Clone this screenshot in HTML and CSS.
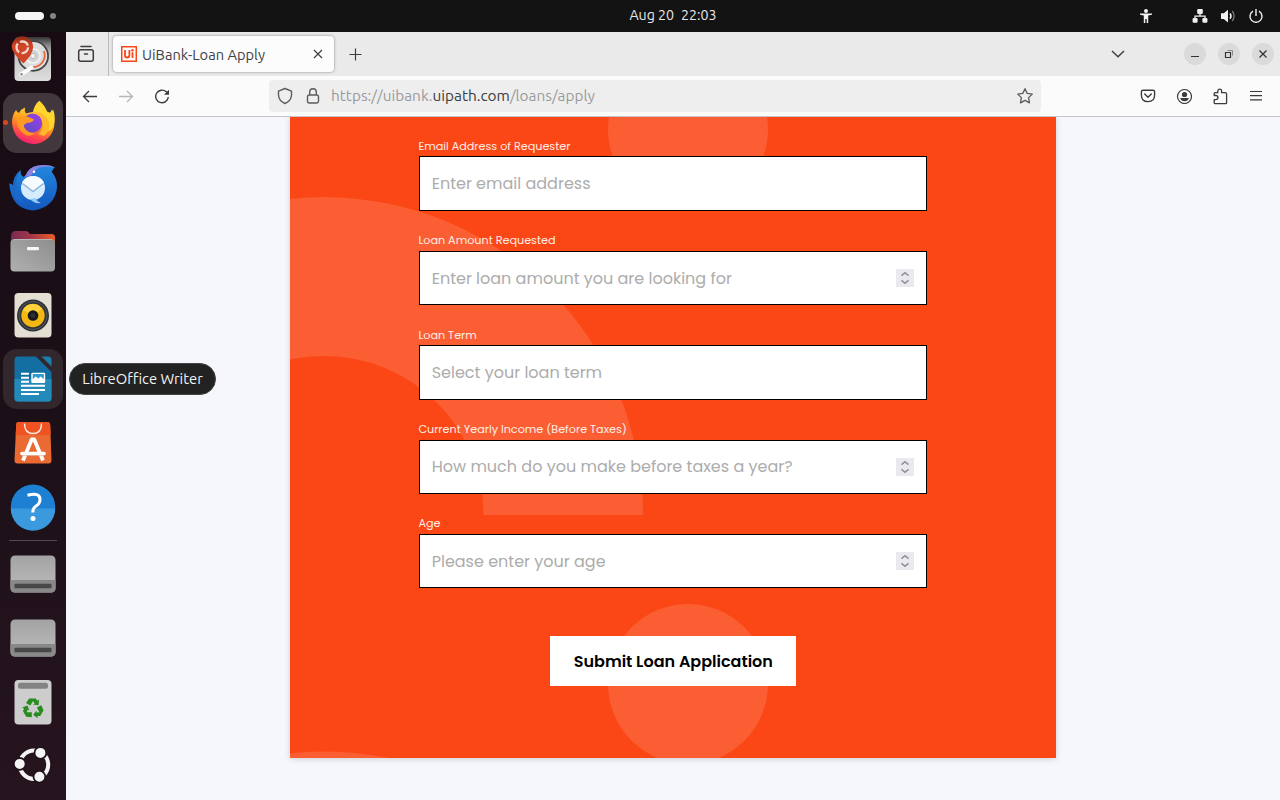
FILE: index.html
```html
<!DOCTYPE html>
<html lang="en">
<head>
<meta charset="utf-8">
<title>UiBank-Loan Apply</title>
<link rel="stylesheet" href="styles.css">
</head>
<body>
<div class="desktop">
  <header class="topbar">
    <div class="workspaces"><span class="pill"></span><span class="dot"></span></div>
    <div class="clock"><span>Aug 20</span><span>22:03</span></div>
    <div class="tray">
      <svg class="tray-access" width="16" height="16" viewBox="0 0 16 16" fill="#f2f2f2"><circle cx="8" cy="3" r="2"/><path d="M2 5.500h12v1.200l-3.800.8V15H8.700v-4H7.300v4H5.800V7.500L2 6.700z"/></svg>
      <svg width="16" height="16" viewBox="0 0 16 16"><g fill="#f2f2f2"><rect x="5.200" y="1" width="5.600" height="5" rx="1.200"/><rect x=".6" y="10" width="5" height="4.800" rx="1.200"/><rect x="10.400" y="10" width="5" height="4.800" rx="1.200"/></g><path d="M8 6v2.200M3 10V8.200h10V10" fill="none" stroke="#f2f2f2" stroke-width="1.300"/></svg>
      <svg width="16" height="16" viewBox="0 0 16 16"><path d="M1 5.300h2.800L8 1.800v12.600L3.800 11H1z" fill="#f2f2f2"/><path d="M10 5.500q2 2.600 0 5.200" fill="none" stroke="#f2f2f2" stroke-width="1.500"/><path d="M12.300 3q3.600 5 0 10.200" fill="none" stroke="#777" stroke-width="1.300"/></svg>
      <svg width="16" height="16" viewBox="0 0 16 16" fill="none" stroke="#f2f2f2" stroke-width="1.400"><path d="M5 3.100a6 6 0 1 0 6 0M8 1v7"/></svg>
    </div>
  </header>

  <div class="workarea">
    <nav class="dock">
      <span class="app"><svg width="60" height="60" viewBox="0 0 60 60">
        <defs>
          <linearGradient id="disk" x2="0" y2="1"><stop offset="0" stop-color="#333"/><stop offset=".2" stop-color="#8c8c8c"/><stop offset=".4" stop-color="#c4c4c4"/><stop offset="1" stop-color="#dedede"/></linearGradient>
          <linearGradient id="pin" x2="0" y2="1"><stop offset="0" stop-color="#8d2c17"/><stop offset=".35" stop-color="#cf4526"/></linearGradient>
          <linearGradient id="fox" x1=".7" x2=".3" y2="1"><stop offset="0" stop-color="#ffe83b"/><stop offset=".45" stop-color="#ff9a18"/><stop offset=".75" stop-color="#ff4a4a"/><stop offset="1" stop-color="#f2177d"/></linearGradient>
          <linearGradient id="orb" x1="1" x2="0" y2="1"><stop offset="0" stop-color="#a03bea"/><stop offset="1" stop-color="#5a4fc4"/></linearGradient>
          <linearGradient id="bird" x2="0" y2="1"><stop offset="0" stop-color="#2388df"/><stop offset="1" stop-color="#1357bd"/></linearGradient>
          <linearGradient id="gray" x2="0" y2="1"><stop offset="0" stop-color="#a3a3a3"/><stop offset="1" stop-color="#bcbcbc"/></linearGradient>
          <linearGradient id="folder" x1="1" x2="0" y2="1"><stop offset="0" stop-color="#8d8d8d"/><stop offset="1" stop-color="#b0b0b0"/></linearGradient>
          <linearGradient id="tabgrad"><stop offset="0" stop-color="#772953"/><stop offset=".45" stop-color="#a43747"/><stop offset="1" stop-color="#f05a28"/></linearGradient>
        </defs>
        <rect x="11.500" y="8" width="36.500" height="44" rx="4" fill="url(#disk)"/>
        <circle cx="30.300" cy="27" r="14.800" fill="#ddd" stroke="#454545" stroke-width="1.800"/><circle cx="30" cy="27" r="7" fill="#d2d2d2" stroke="#efefef" stroke-width="2"/><circle cx="30" cy="27" r="2.500" fill="#f4f4f4" stroke="#bbb"/>
        <path d="M41 22a12 12 0 0 1-13 16" fill="none" stroke="#e9633c" stroke-width="1.800"/>
        <path d="M18 45.500L28.500 38.500" stroke="#fafafa" stroke-width="4" stroke-linecap="round"/><circle cx="18.500" cy="45.300" r="1.200" fill="#888"/>
        <path d="M20.500 34.500Q9 24 8.700 18a10.700 10.700 0 0 1 21.400 0Q30 25 20.500 34.500" fill="url(#pin)"/><circle cx="19.300" cy="18.300" r="5.800" fill="none" stroke="#f0d4ca" stroke-width="2.300" stroke-dasharray="9.600 2.500"/>
      </svg></span>
      <span class="app running"><svg width="60" height="60" viewBox="0 0 60 60">
        <path d="M9 30Q9 22 13 17q1 2 3 3 2-4 6-5.500-1 3.500 1 6 8-3 12 0 12 3 15-4 2.500 6 1.500 13A21 21 0 0 1 30 51Q11 49 9 30" fill="url(#fox)"/>
        <path d="M36.300 7.700q5 4 8 11l3 1 1.500-3q3 6 2.500 13-2 9-9 9 0-8-6-16l-6.500-2q1-9 6.500-13" fill="#ffd52f"/>
        <circle cx="29.700" cy="30" r="9.500" fill="url(#orb)"/>
        <path d="M29 20q9 1 11 9 1 8-5 12l6 2q7-6 5-14-4-10-13-10" fill="#ffb92b"/>
        <path d="M14 25q6-4 14 0l3 1.500q-1 3-6 3.300-5 1.200-4 4.200 3 7 11 6-5 5-11 1-8-6-7-16" fill="#ff9a24"/>
      </svg></span>
      <span class="app"><svg width="60" height="60" viewBox="0 0 60 60">
        <path d="M17.700 13q-1 4 2.600 7L23 18Q27 8.500 38 8.500q9-1 14 2-2 1-3.300 4.200 6 7 5.300 16Q52 50 30 53.500 8 52 6.300 26.300l4 2Q10 19 17.700 13" fill="url(#bird)"/>
        <path d="M22 19.700Q25 10 35 8.500q10-1.500 17 2-9-1.500-16 0-5 3-7 7-2 2-7 2.200" fill="#8b82e0"/><path d="M17.700 13q-6 8-4 16 1 10 8 17Q8 43 8 27l2.300 1.300Q10 19 17.700 13" fill="#1b68c9"/>
        <circle cx="30" cy="31" r="12" fill="#d5ecff"/><path d="M19 26l11 8.500L41 26q-3-7-11-7t-11 7" fill="#f6fbff"/><path d="M19.500 26.500l10.500 8 10.500-8" fill="none" stroke="#8fb2e0" stroke-width="1.400"/><path d="M27 42q4 5 11 4-5-2-5-5" fill="#91ccff"/><circle cx="31" cy="14.800" r="1.200" fill="#fff"/>
      </svg></span>
      <span class="app"><svg width="60" height="60" viewBox="0 0 60 60">
        <path d="M8 17q0-7 4-7h11q2 0 4 3h22q3 0 3 4v8H8z" fill="url(#tabgrad)"/><rect x="7.500" y="18" width="44.500" height="32.500" rx="4" fill="url(#folder)"/><path d="M11 18.500h38" stroke="#b8b8b8"/><rect x="24" y="26" width="12" height="3.200" rx="1" fill="#f7f7f7"/>
      </svg></span>
      <span class="app"><svg width="60" height="60" viewBox="0 0 60 60">
        <rect x="11.500" y="8" width="37" height="44.500" rx="4" fill="#e4dfd3"/><circle cx="30" cy="30.500" r="16" fill="#303338"/><circle cx="30" cy="30.500" r="14" fill="none" stroke="#535861"/><circle cx="30" cy="30.500" r="11.700" fill="#f3b712"/><path d="M20 25l10 5.500L39 24a11.500 11.500 0 0 0-9-5q-7 0-10 6" fill="#ffd33b"/><circle cx="30" cy="30.500" r="5.300" fill="#17191c"/><circle cx="30" cy="30.500" r="2.500" fill="#2c3036"/>
      </svg></span>
      <span class="app hovered"><svg width="60" height="60" viewBox="0 0 60 60">
        <path d="M15 7.500h18L48.500 23v26q0 3.500-3.500 3.500H15q-3.500 0-3.500-3.500V11q0-3.500 3.500-3.500" fill="#136fa1"/><path d="M11.500 30h37v19q0 3.500-3.500 3.500H15q-3.500 0-3.500-3.500z" fill="#248aba"/><path d="M38.500 7.500H45q3.500 0 3.500 3.500v6.500z" fill="#1c80ae"/>
        <path d="M18 24.700h8M18 28.700h8M18 32.700h8M18 36.800h24M18 41h24M18 45h18" stroke="#fff" stroke-width="1.900"/><rect x="29" y="24.400" width="12.500" height="9" rx=".7" fill="#2d9bd0" stroke="#fff" stroke-width="1.400"/><path d="M29 33.500V31l3.500-3.500 3 2 2-2 4 3v3z" fill="#fff"/>
      </svg></span>
      <span class="app"><svg width="60" height="60" viewBox="0 0 60 60">
        <path d="M15.500 9h29q2.500 0 2.700 3L48.500 47q0 3.500-3 3.500h-31q-3 0-3-3.500l1.700-35q0-3 2.300-3" fill="#e96a32"/><path d="M15.500 9h29q2.500 0 2.700 3l.5 10H12.700l.5-10q0-3 2.300-3" fill="#f05322"/><path d="M21.500 10.500q0 10 8.500 10t8.500-10" fill="none" stroke="#f7e7dd" stroke-width="1.500"/>
        <path d="M20 47.500L28.700 26.500h2.600L40 47.500" fill="none" stroke="#fff" stroke-width="3.800" stroke-linejoin="round"/><path d="M19 40.500h22" stroke="#fff" stroke-width="3.600" stroke-linecap="round"/><path d="M18 42.600h24" stroke="#d9b5a2" stroke-width=".7"/>
      </svg></span>
      <span class="app"><svg width="60" height="60" viewBox="0 0 60 60"><circle cx="30" cy="29.700" r="22.200" fill="#1e80d2"/><path d="M7.800 31.500a22.200 22.200 0 0 0 44.400 0z" fill="#3b99de"/><path d="M24.500 18.300q12.500-3.500 12.500 4.200 0 4-4 6.500-3.200 2-3.200 6.500" fill="none" stroke="#fff" stroke-width="3"/><circle cx="30" cy="41.500" r="2.500" fill="#fff"/></svg></span>
      <span class="divider"></span>
      <span class="app"><svg width="60" height="60" viewBox="0 0 60 60"><rect x="7.500" y="11.500" width="45" height="37" rx="4.500" fill="url(#gray)"/><path d="M7.500 36h45v8q0 4.500-4.500 4.500H12q-4.500 0-4.500-4.500z" fill="#898989"/><rect x="11.500" y="39.700" width="37" height="4.500" rx=".8" fill="#484848"/></svg></span>
      <span class="app"><svg width="60" height="60" viewBox="0 0 60 60"><rect x="7.500" y="11.500" width="45" height="37" rx="4.500" fill="url(#gray)"/><path d="M7.500 36h45v8q0 4.500-4.500 4.500H12q-4.500 0-4.500-4.500z" fill="#898989"/><rect x="11.500" y="39.700" width="37" height="4.500" rx=".8" fill="#484848"/></svg></span>
      <span class="app"><svg width="60" height="60" viewBox="0 0 60 60"><rect x="11.500" y="8" width="37" height="44.500" rx="4" fill="#cdcdcd"/><rect x="15" y="10.800" width="30" height="6" rx="2.500" fill="#838383"/>
        <g fill="#278b1e"><g id="arm"><path d="M23 31l3.200-4.500h6.600l1.500 2.200 1.900-1.100-.8 5.600-5.400-.8 1.700-1-1.700-2.300-2.700 4.500z"/></g><use href="#arm" transform="rotate(120 30 36.500)"/><use href="#arm" transform="rotate(240 30 36.500)"/></g></svg></span>
      <span class="app launcher"><svg width="60" height="60" viewBox="0 0 60 60"><circle cx="31" cy="29.700" r="14.200" fill="none" stroke="#f4f4f4" stroke-width="4"/><g fill="#f4f4f4" stroke="#21131b" stroke-width="1.800"><circle cx="16.700" cy="28.900" r="5.900"/><circle cx="37.400" cy="17.900" r="5.900"/><circle cx="36.400" cy="41.700" r="5.900"/></g></svg></span>
    </nav>

    <main class="browser">
      <div class="tabstrip">
        <span class="recent"><svg width="18" height="18" viewBox="0 0 18 18" fill="none" stroke="#3b3b40" stroke-width="1.500" stroke-linecap="round"><path d="M4 1.500h10"/><rect x="1.700" y="4.700" width="14.600" height="11.500" rx="2"/><path d="M7.500 9h3"/></svg></span>
        <div class="tab">
          <svg class="favicon" width="16" height="16" viewBox="0 0 16 16"><rect width="16" height="16" fill="#fa4616"/><rect x="1.500" y="1.500" width="13" height="13" fill="#fff"/><path d="M4 4v5.200q0 2.300 2.200 2.300t2.200-2.300V4M11.500 6.300v5.600" fill="none" stroke="#fa4616" stroke-width="1.800"/><circle cx="11.500" cy="4.200" r="1.200" fill="#fa4616"/></svg>
          <span class="tab-title">UiBank-Loan Apply</span>
          <svg class="close" width="10" height="10" viewBox="0 0 10 10" stroke="#3b3b40" stroke-width="1.100"><path d="M1 1l8 8M9 1L1 9"/></svg>
        </div>
        <svg class="newtab" width="13" height="13" viewBox="0 0 13 13" stroke="#3b3b40" stroke-width="1.200"><path d="M6.500 .5v12M.5 6.500h12"/></svg>
        <svg class="alltabs" width="14" height="8" viewBox="0 0 14 8" fill="none" stroke="#3b3b40" stroke-width="1.400"><path d="M1 1l6 5.800L13 1"/></svg>
        <div class="window-buttons">
          <span><svg width="10" height="10" viewBox="0 0 10 10" stroke="#333" stroke-width="1"><path d="M1 7.500h8"/></svg></span>
          <span><svg width="10" height="10" viewBox="0 0 10 10" fill="none" stroke="#333"><path d="M3.500 1.500h5v5" stroke="#888"/><path d="M1.500 3.500h5v5h-5z" stroke-width="1.200"/></svg></span>
          <span><svg width="10" height="10" viewBox="0 0 10 10" stroke="#333" stroke-width="1.300"><path d="M1.500 1.500l7 7M8.500 1.500l-7 7"/></svg></span>
        </div>
      </div>
      <div class="toolbar">
        <div class="nav">
          <svg width="16" height="16" viewBox="0 0 16 16" fill="none" stroke="#3b3b40" stroke-width="1.300"><path d="M15 8.500H1.500M7 3L1.500 8.500 7 14"/></svg>
          <svg width="16" height="16" viewBox="0 0 16 16" fill="none" stroke="#b6b6b8" stroke-width="1.300"><path d="M1 8.500h13.500M9 3l5.500 5.500L9 14"/></svg>
          <svg width="16" height="16" viewBox="0 0 16 16" fill="none" stroke="#3b3b40" stroke-width="1.400"><path d="M14.300 9a6.300 6.300 0 1 1-2-5.200L14 5.500"/><path d="M15 1.800v5h-5z" fill="#3b3b40" stroke="none"/></svg>
        </div>
        <div class="urlbar">
          <svg width="16" height="18" viewBox="0 0 16 18" fill="none" stroke="#5c5c60" stroke-width="1.400" stroke-linejoin="round"><path d="M8 1.500l6.500 2.700v4Q14 14 8 16.500 2 14 1.500 8.200v-4z"/></svg>
          <svg class="lock" width="14" height="18" viewBox="0 0 14 18" fill="none" stroke="#5c5c60" stroke-width="1.400"><rect x="1.500" y="8" width="11" height="8" rx="1.700"/><path d="M3.700 8V5a3.300 3.300 0 0 1 6.600 0v3"/></svg>
          <span class="url">https://uibank.<b>uipath.com</b>/loans/apply</span>
          <svg class="star" width="18" height="18" viewBox="0 0 18 18" fill="none" stroke="#5c5c60" stroke-width="1.300" stroke-linejoin="round"><path d="M9 1.700l2.200 4.700 5.100.7-3.700 3.500.9 5.300L9 13.400l-4.500 2.500.9-5.300L1.700 7.100l5.100-.7z"/></svg>
        </div>
        <div class="actions">
          <svg width="16" height="16" viewBox="0 0 16 16" fill="none" stroke="#3b3b40" stroke-width="1.400" stroke-linejoin="round" stroke-linecap="round"><path d="M3 2.200h10q1.600 0 1.600 1.600V7q0 6.600-6.600 6.600T1.400 7V3.800q0-1.600 1.600-1.600M4.700 6L8 9.200 11.300 6"/></svg>
          <svg width="16" height="16" viewBox="0 0 16 16"><circle cx="8.500" cy="8.500" r="7" fill="none" stroke="#3b3b40" stroke-width="1.200"/><circle cx="8.500" cy="6.500" r="2.600" fill="#3b3b40"/><path d="M4.200 10h8.600q-1 3.200-4.300 3.200T4.200 10" fill="#3b3b40"/></svg>
          <svg width="16" height="17" viewBox="0 0 16 17" fill="none" stroke="#3b3b40" stroke-width="1.300" stroke-linejoin="round"><path d="M2.200 7.500V5.700q0-1 1-1h2.600V3a1.900 1.900 0 0 1 3.800 0v1.700h3.700q1.300 0 1.300 1.300v8.700q0 1-1 1H3.200q-1 0-1-1v-3h1.600a2 2 0 0 0 0-4.200z"/></svg>
          <svg width="16" height="16" viewBox="0 0 16 16" stroke="#3b3b40" stroke-width="1.200"><path d="M2 3.500h12M2 7.700h12M2 11.900h12"/></svg>
        </div>
      </div>

      <div class="page">
        <form class="loan-card">
          <svg class="pattern" width="766" height="641" viewBox="0 0 766 641" fill="#fc5e34"><circle cx="398" cy="13" r="80"/><circle cx="398" cy="567" r="80"/><path d="M-285 398a319 318 0 0 1 638 0H193.500a159.500 159 0 0 0-319 0z"/><ellipse cx="34" cy="952.500" rx="319" ry="318"/></svg>
          <div class="fields">
            <label class="field"><span>Email Address of Requester</span><span class="control"><input placeholder="Enter email address"></span></label>
            <label class="field"><span>Loan Amount Requested</span><span class="control"><input placeholder="Enter loan amount you are looking for"><svg class="spin" width="18" height="18" viewBox="0 0 18 18"><path d="M5.500 6.700L9 3.700l3.500 3M5.500 11.300L9 14.300l3.500-3"/></svg></span></label>
            <label class="field"><span>Loan Term</span><span class="control"><input placeholder="Select your loan term"></span></label>
            <label class="field"><span>Current Yearly Income (Before Taxes)</span><span class="control"><input placeholder="How much do you make before taxes a year?"><svg class="spin" width="18" height="18" viewBox="0 0 18 18"><path d="M5.500 6.700L9 3.700l3.500 3M5.500 11.300L9 14.300l3.500-3"/></svg></span></label>
            <label class="field"><span>Age</span><span class="control"><input placeholder="Please enter your age"><svg class="spin" width="18" height="18" viewBox="0 0 18 18"><path d="M5.500 6.700L9 3.700l3.500 3M5.500 11.300L9 14.300l3.500-3"/></svg></span></label>
          </div>
          <button class="submit" type="button">Submit Loan Application</button>
        </form>
      </div>
    </main>
  </div>
  <div class="tooltip">LibreOffice Writer</div>
</div>
</body>
</html>
```

FILE: styles.css
```css
* { box-sizing: border-box; }
body { margin: 0; }
svg { display: block; flex: none; }
.desktop { position: relative; width: 1280px; height: 800px; overflow: hidden; display: flex; flex-direction: column; font-family: Ubuntu, "Noto Sans", sans-serif; font-size: 14.67px; font-weight: 400; }
.topbar { flex: none; height: 32px; background: #131313; color: #f2f2f2; display: grid; grid-template-columns: 1fr auto 1fr; align-items: center; padding: 0 16px 0 15px; }
.workspaces { display: flex; align-items: center; gap: 6px; }
.pill { width: 29px; height: 8px; border-radius: 4px; background: #f5f5f5; }
.dot { width: 6px; height: 6px; border-radius: 50%; background: #858585; }
.clock { display: flex; gap: 7px; line-height: 20px; padding-bottom: 2px; transform: translateX(33.5px); font-size: 14.2px; color: #e8e8e8; }
.tray { display: flex; justify-content: flex-end; gap: 12px; }
.tray-access { margin-right: 26px; }
.workarea { flex: 1; min-height: 0; display: flex; }
.dock { flex: none; width: 66px; background: linear-gradient(#180b13, #1c1018 50%, #26141e); overflow: hidden; display: flex; flex-direction: column; align-items: center; gap: 4px; }
.app { flex: none; position: relative; width: 60px; height: 60px; border-radius: 14px; }
.app:first-child { margin-top: -3px; }
.running { background: #41373d; }
.running::before { content: ""; position: absolute; left: 0; top: 27px; width: 5px; height: 5px; border-radius: 50%; background: #dc461c; }
.hovered { background: #32272d; }
.divider { flex: none; width: 48px; height: 1px; background: #514950; margin: -1px 0; }
.launcher { margin-top: -1px; }
.browser { flex: 1; min-width: 0; display: flex; flex-direction: column; }
.tabstrip { flex: none; height: 44px; background: #eaeaea; display: flex; align-items: center; padding-right: 6px; }
.recent { width: 43px; height: 44px; border-right: 1px solid #b9b9b9; display: flex; align-items: center; padding-left: 11px; }
.tab { width: 221px; height: 36px; margin-left: 4px; border-radius: 4px; background: #fcfcfc; box-shadow: 0 0 3px #888; display: flex; align-items: center; padding: 0 11px 0 8px; color: #414146; }
.tab-title { flex: 1; margin-left: 5px; white-space: nowrap; }
.newtab { margin-left: 15px; }
.alltabs { margin-left: auto; }
.window-buttons { display: flex; gap: 12px; margin-left: 59px; }
.window-buttons span { width: 22px; height: 22px; border-radius: 50%; background: #dadada; display: grid; place-items: center; }
.toolbar { flex: none; height: 41px; background: #fbfbfb; border-bottom: 1px solid #c5c5c5; display: flex; align-items: center; padding: 0 16px; }
.nav { display: flex; gap: 20px; }
.urlbar { width: 772px; height: 32px; margin-left: 99px; background: #eee; border-radius: 4px; display: flex; align-items: center; padding: 0 7px 0 8px; color: #9a9a9d; }
.lock { margin-left: 13px; }
.url { margin-left: 11px; flex: 1; font-size: 15.4px; white-space: nowrap; padding-bottom: 1px; }
.url b { font-weight: 400; color: #3b3b40; }
.actions { display: flex; gap: 20px; margin-left: auto; }
.page { flex: 1; min-height: 0; overflow: hidden; background: #f5f7fb; padding-left: 224px; }
.loan-card { position: relative; width: 766px; height: 641px; background: #fb4616; box-shadow: 0 1px 6px rgba(0,0,0,.16); padding: 20.1px 128.8px 0 128.4px; display: flex; flex-direction: column; align-items: center; font-family: Poppins, Lato, sans-serif; font-weight: 400; }
.pattern { position: absolute; left: 0; top: 0; }
.fields { position: relative; width: 508.8px; }
.field { display: block; height: 94.35px; color: #ffeee8; font-size: 11.2px; line-height: 19px; }
.field > span:first-child { display: block; height: 19.4px; }
.control { display: flex; align-items: center; margin-left: .3px; width: 508.3px; height: 54.4px; background: #fff; border: 1px solid #000; padding: 0 12px; }
.control input { flex: 1; min-width: 0; border: 0; outline: 0; padding: 0; background: transparent; font: 16px Poppins, Lato, sans-serif; }
.control input::placeholder { color: #acacac; opacity: 1; }
.spin { background: #e9e9ee; fill: none; stroke: #8f8f9d; stroke-width: 1.6; }
.submit { position: relative; margin-top: 27px; width: 246px; height: 50px; padding: 1px 0 0 1px; border: 0; background: #fff; color: #000; font: 600 16px Poppins, Lato, sans-serif; }
.tooltip { position: absolute; left: 69px; top: 363px; width: 147px; height: 32px; border-radius: 16px; border: 1px solid #444; background: #222; color: #f3f3f3; display: grid; place-items: center; padding-bottom: 1px; white-space: nowrap; font-size: 14.8px; }
```
